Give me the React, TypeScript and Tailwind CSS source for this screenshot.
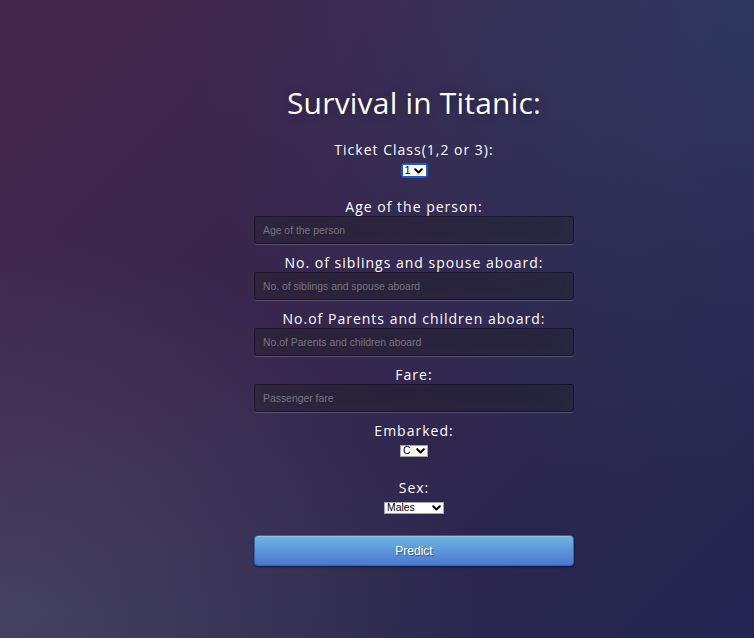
import { useState } from "react";

const bg =
  "bg-[radial-gradient(ellipse_at_0%_100%,rgba(104,128,138,.28)_5%,rgba(104,128,138,0)_45%),radial-gradient(ellipse_at_100%_0%,rgba(40,80,120,.4)_0%,rgba(40,80,120,0)_55%),linear-gradient(135deg,#46274c_0%,#222650_100%)]";

const fields = [
  { label: "Age of the person:", name: "age", placeholder: "Age of the person" },
  {
    label: "No. of siblings and spouse aboard:",
    name: "sibsp",
    placeholder: "No. of siblings and spouse aboard",
  },
  {
    label: "No.of Parents and children aboard:",
    name: "parch",
    placeholder: "No.of Parents and children aboard",
  },
  { label: "Fare:", name: "fare", placeholder: "Passenger fare" },
];

function Chevron() {
  return (
    <svg
      className="pointer-events-none absolute right-[3px] top-1/2 -translate-y-1/2"
      width="9"
      height="6"
      viewBox="0 0 9 6"
      fill="none"
    >
      <path
        d="M1.2 1.2l3.3 3.3 3.3-3.3"
        stroke="#000"
        strokeWidth="2"
        strokeLinecap="round"
        strokeLinejoin="round"
      />
    </svg>
  );
}

export default function App() {
  const [values, setValues] = useState<Record<string, string>>({});
  const [pclass, setPclass] = useState("1");
  const [embarked, setEmbarked] = useState("C");
  const [sex, setSex] = useState("Males");

  const label =
    "block h-[18px] text-center text-[14px] leading-[18px] tracking-[1px] text-white font-['Open_Sans',sans-serif]";

  return (
    <div className={`min-h-screen w-full ${bg} pt-[85px]`}>
      <form
        className="ml-[254px] w-[320px]"
        onSubmit={(e) => e.preventDefault()}
      >
        <h1 className="text-center text-[30px] leading-[36px] tracking-[0.2px] text-white font-['Open_Sans',sans-serif] [text-shadow:0_0_10px_rgba(0,0,0,0.3)]">
          Survival in Titanic:
        </h1>

        {/* Ticket class */}
        <label className={`${label} mt-[20px]`}>Ticket Class(1,2 or 3):</label>
        <div className="mt-[4px] flex justify-center">
          <div className="relative inline-block rounded-[4px] border-2 border-[#1d5bd0] bg-white">
            <select
              value={pclass}
              onChange={(e) => setPclass(e.target.value)}
              className="block h-[11px] w-[23px] appearance-none bg-white pl-[2px] text-[11px] leading-[11px] text-black outline-none font-['Liberation_Sans',Arial,sans-serif]"
            >
              <option value="1">1</option>
              <option value="2">2</option>
              <option value="3">3</option>
            </select>
            <Chevron />
          </div>
        </div>

        {/* Numeric fields */}
        <div className="mt-[20px]">
          {fields.map((f) => (
            <div key={f.name}>
              <label className={label}>{f.label}</label>
              <input
                name={f.name}
                value={values[f.name] || ""}
                onChange={(e) =>
                  setValues((prev) => ({ ...prev, [f.name]: e.target.value }))
                }
                placeholder={f.placeholder}
                className="mb-[10px] block h-[28px] w-full rounded-[3px] border border-[rgba(0,0,0,0.3)] bg-[rgba(0,0,0,0.3)] px-[8px] text-[10.4px] text-white outline-none font-['Liberation_Sans',Arial,sans-serif] placeholder:text-[#76757f] shadow-[inset_0_-4px_36px_rgba(100,100,100,0.2),0_1px_1px_rgba(255,255,255,0.2)]"
              />
            </div>
          ))}
        </div>

        {/* Embarked */}
        <label className={label}>Embarked:</label>
        <div className="mt-[5px] flex justify-center">
          <div className="relative inline-block">
            <select
              value={embarked}
              onChange={(e) => setEmbarked(e.target.value)}
              className="block h-[12px] w-[28px] appearance-none border border-[#a5a5a5] bg-white pl-[2px] text-[10.4px] leading-[10px] text-black outline-none font-['Liberation_Sans',Arial,sans-serif]"
            >
              <option value="C">C</option>
              <option value="Q">Q</option>
              <option value="S">S</option>
            </select>
            <Chevron />
          </div>
        </div>

        {/* Sex */}
        <label className={`${label} mt-[22px]`}>Sex:</label>
        <div className="mt-[5px] flex justify-center">
          <div className="relative inline-block">
            <select
              value={sex}
              onChange={(e) => setSex(e.target.value)}
              className="block h-[12px] w-[60px] appearance-none border border-[#a5a5a5] bg-white pl-[2px] text-[10.4px] leading-[10px] text-black outline-none font-['Liberation_Sans',Arial,sans-serif]"
            >
              <option value="Males">Males</option>
              <option value="Females">Females</option>
            </select>
            <Chevron />
          </div>
        </div>

        <button
          type="submit"
          className="mt-[21px] block h-[31px] w-full rounded-[4px] border border-[#3762bc] bg-[linear-gradient(to_bottom,#6eb6de,#4a77d4)] text-[12px] text-white font-['Liberation_Sans',Arial,sans-serif] [text-shadow:1px_1px_1px_rgba(0,0,0,0.4)] shadow-[inset_0_1px_0_rgba(255,255,255,0.2),0_1px_2px_rgba(0,0,0,0.5)]"
        >
          Predict
        </button>
      </form>
    </div>
  );
}
